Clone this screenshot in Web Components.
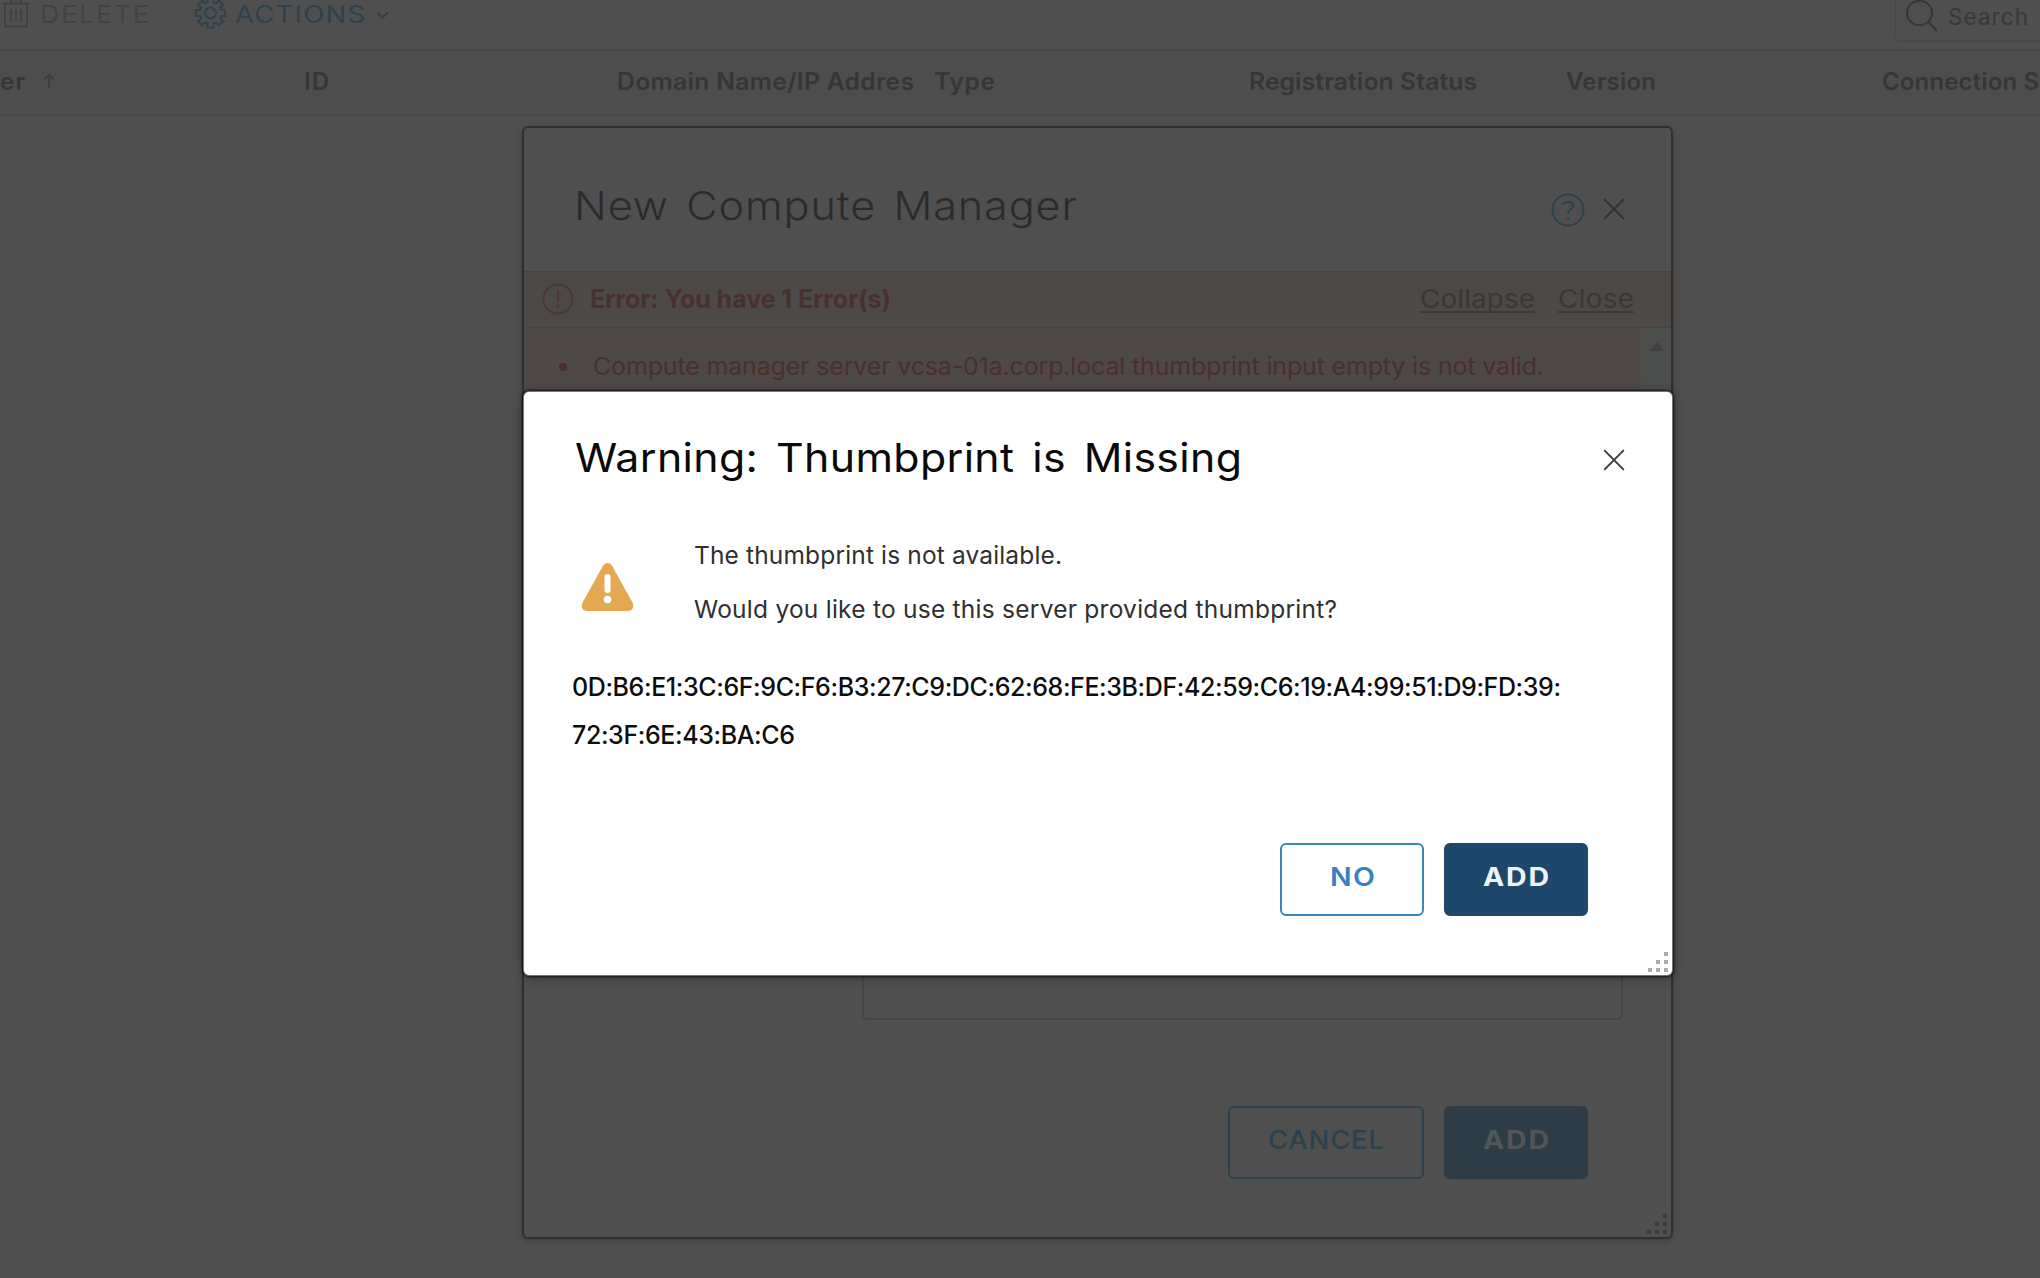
<!DOCTYPE html>
<html lang="en">
<head>
<meta charset="utf-8">
<title>Compute Managers</title>
<style>
html,body{margin:0;padding:0;width:2040px;height:1278px;overflow:hidden;background:#4f4f4f;font-family:Inter,"Liberation Sans",sans-serif}
</style>
</head>
<body>
<compute-page></compute-page>
<script>
const define = (name, html, init) => {
  const t = document.createElement('template');
  t.innerHTML = html.trim();
  customElements.define(name, class extends HTMLElement {
    connectedCallback() {
      if (this.shadowRoot) return;
      this.attachShadow({mode: 'open'}).append(t.content.cloneNode(true));
      if (init) init(this, this.shadowRoot);
    }
  });
};

// A single line of text that fills the width "w": glyphs widened by "s", the rest by tracking.
define('tracked-text', `<style>:host{display:block;white-space:pre;flex:none}span{display:inline-block;vertical-align:top;transform-origin:0 50%}</style><span><slot></slot></span>`,
(el, root) => {
  const s = root.querySelector('span');
  const w = parseFloat(el.getAttribute('w'));
  const k = parseFloat(el.getAttribute('s') || 1);
  const ls = (w / k - s.getBoundingClientRect().width) / (el.textContent.length - 1);
  s.style.letterSpacing = ls.toFixed(3) + 'px';
  s.style.marginRight = '-60px';
  if (k !== 1) s.style.transform = 'scaleX(' + k + ')';
  el.style.width = w + 'px';
});

define('close-icon', `
<style>:host{display:block;width:22px;height:22px}svg{display:block}</style>
<svg width="22" height="22" viewBox="0 0 22 22" fill="none" stroke="currentColor" stroke-width="1.9"><path d="M1.2 1.2L20.8 20.8M20.8 1.2L1.2 20.8"/></svg>`);

define('resize-grip', `
<style>:host{display:block;position:absolute;right:4px;bottom:3px}svg{display:block}</style>
<svg width="20" height="20" viewBox="0 0 20 20" fill="currentColor"><path d="M16 0h4v4h-4zM8 8h4v4h-4zM16 8h4v4h-4zM0 16h4v4H0zM8 16h4v4H8zM16 16h4v4h-4z"/></svg>`);

define('action-button', `
<style>
:host{display:flex;justify-content:center;box-sizing:border-box;height:73px;border:2px solid var(--line);border-radius:6px;background:var(--fill,transparent);color:var(--ink);font-size:25px;line-height:64px}
</style><slot></slot>`);

define('tool-bar', `
<style>
:host{display:flex;height:49px;box-sizing:border-box;font-size:24.500px;line-height:29px;color:#424242}
svg{display:block;flex:none}
.del{margin-left:10px}.gear{margin-left:45px}.act{margin-left:8px;color:#2d414e}.chev{margin:11px 0 0 11px}
.search{margin-left:auto;display:flex;width:145px;height:42px;box-sizing:border-box;border:solid #484848;border-width:0 0 2px 1px;border-radius:0 0 0 5px;padding-left:10px;font-size:22.500px;line-height:33px;color:#383838}
.search tracked-text{margin-left:10px}
</style>
<svg width="30" height="29" viewBox="0 0 30 29" fill="none" stroke="#404040" stroke-width="1.8"><path d="M2 3.5H30M5 4V26.5H27V4M11 9V22M16 9V22M21 9V22M11 3V0M21 3V0"/></svg>
<tracked-text class="del" w="109" s="1.1">DELETE</tracked-text>
<svg class="gear" width="33" height="29" viewBox="-16.500 -13 33 29" fill="none" stroke="#2d414e" stroke-width="2"><path id="g"/><circle r="5.400"/></svg>
<tracked-text class="act" w="130" s="1.12">ACTIONS</tracked-text>
<svg class="chev" width="13" height="9" viewBox="0 0 13 9" fill="none" stroke="#363b3e" stroke-width="2"><path d="M1.500 1.500L6.500 6.500L11.500 1.500"/></svg>
<div class="search"><svg width="32" height="34" viewBox="0 0 32 34" fill="none" stroke="#363636" stroke-width="2"><ellipse cx="13.500" cy="13" rx="12.500" ry="12.200"/><path d="M23 22.500L31 31"/></svg><tracked-text w="80">Search</tracked-text></div>`,
(el, root) => {
  // Eight-toothed cog outline
  let d = '';
  for (let i = 0; i < 8; i++) {
    const a = i * Math.PI / 4;
    [[-.27, 11], [-.2, 15], [.2, 15], [.27, 11]].forEach(([o, r], k) => {
      d += (i || k ? 'L' : 'M') + (r * Math.cos(a + o)).toFixed(2) + ' ' + (r * Math.sin(a + o)).toFixed(2);
    });
  }
  root.getElementById('g').setAttribute('d', d + 'Z');
});

define('grid-header', `
<style>
:host{display:grid;grid-template-columns:304px 313px 317px 315px 317px 316px 1fr;height:67px;box-sizing:border-box;border-top:2px solid #484848;border-bottom:1px solid #454545;background:#4d4d4d;font-size:24px;font-weight:600;line-height:62px;color:#363636}
.first{display:flex}svg{margin:22px 0 0 18px}
</style>
<div class="first"><tracked-text w="25">er</tracked-text><svg width="12" height="16" viewBox="0 0 12 16" fill="none" stroke="#2f414c" stroke-width="1.9"><path d="M6 15V2M1.500 6.500L6 2L10.500 6.500"/></svg></div>
<tracked-text w="25">ID</tracked-text>
<tracked-text w="297" s="1.03">Domain Name/IP Addres</tracked-text>
<tracked-text w="61" s="1.03">Type</tracked-text>
<tracked-text w="228" s="1.03">Registration Status</tracked-text>
<tracked-text w="90">Version</tracked-text>
<tracked-text w="157">Connection S</tracked-text>`);

define('error-panel', `
<style>
:host{display:block;color:#49302c;background:#4e4847;height:121px;overflow:hidden}
.bar{display:flex;height:57px;box-sizing:border-box;border-top:1px solid #503f3e;border-bottom:1px solid #503f3e;background:#4c4947;padding-left:18px;font-size:25px;line-height:55px}
svg{flex:none;display:block}.bar svg{margin-top:11px}
.bar b{font-weight:700;margin-left:16px}
.links{margin-left:auto;margin-right:37px;display:flex;gap:23px;color:#393738;font-size:26px;line-height:54px}
.links u{text-decoration:none;display:block;height:41px;box-sizing:border-box;border-bottom:2px solid #3d393a}
.list{display:flex;height:64px;font-size:24.500px;line-height:76px}
i{width:8px;height:8px;border-radius:50%;background:#49302c;margin:35px 26px 0 35px}
.scroll{margin-left:auto;width:30px;background:#4c4d4d}.scroll svg{margin:12px 0 0 9px}
</style>
<div class="bar"><svg width="32" height="32" viewBox="0 0 32 32" fill="none" stroke="#4b3835" stroke-width="1.800"><circle cx="16" cy="16" r="14.500"/><path d="M16 7.500V18.500M16 21.500V24.500" stroke-width="2.200"/></svg><b><tracked-text w="301">Error: You have 1 Error(s)</tracked-text></b>
<div class="links"><u><tracked-text w="115" s="1.07">Collapse</tracked-text></u><u><tracked-text w="76" s="1.07">Close</tracked-text></u></div></div>
<div class="list"><i></i><tracked-text w="951" s="1.02">Compute manager server vcsa-01a.corp.local thumbprint input empty is not valid.</tracked-text><div class="scroll"><svg width="14" height="12" viewBox="0 0 14 12" fill="#404040"><path d="M7 2L14 11H0z"/></svg></div></div>`);

define('manager-dialog', `
<style>
:host{position:absolute;left:522px;top:126px;width:1151px;height:1113px;box-sizing:border-box;border:2px solid #303030;border-radius:6px;background:#4f4f4f;box-shadow:0 2px 6px rgba(0,0,0,.22);display:flex;flex-direction:column}
header{display:flex;height:143px;flex:none;box-sizing:border-box;padding:0 47px 0 50px;font-size:40px;font-weight:350;line-height:156px;word-spacing:4px;color:#2b2b2b}
.ic{margin-left:auto;display:flex;gap:18px;padding-top:65px}
close-icon{margin:5px -1px 0 0;color:#303030}
.form{margin:0 48px 0 338px;height:626px;border:solid #454545;border-width:0 2px 2px;border-radius:0 0 5px 5px;flex:none}
footer{display:flex;justify-content:flex-end;gap:20px;margin:86px 83px 0 0}
.c{width:196px;--line:#2c414e;--ink:#2c414e;font-weight:500}.a{width:144px;--line:#2e3c45;--fill:#2e3c45;--ink:#515658;font-weight:700}
resize-grip{color:#3c3c3c}
</style>
<header><tracked-text w="503" s="1.08">New Compute Manager</tracked-text><div class="ic"><svg width="34" height="34" viewBox="0 0 34 34" fill="none" stroke="#2c414e" stroke-width="2.100"><circle cx="17" cy="17" r="15.500"/><path d="M11.500 11.800C13 9.500 15 8.800 17.200 8.800C20.300 8.800 22.300 10.400 22.300 12.900C22.300 16 17.200 16.400 17.200 19.800V21M17.200 24.500V27"/></svg><close-icon></close-icon></div></header>
<error-panel></error-panel>
<div class="form"></div>
<footer><action-button class="c"><tracked-text w="116" s="1.1">CANCEL</tracked-text></action-button><action-button class="a"><tracked-text w="66" s="1.14">ADD</tracked-text></action-button></footer>
<resize-grip></resize-grip>`);

define('warning-dialog', `
<style>
:host{position:absolute;left:524px;top:392px;width:1148px;height:583px;box-sizing:border-box;border-radius:5px;background:#fff;box-shadow:0 0 0 1px #777,0 0 2px 2px rgba(0,0,0,.65),0 2px 12px rgba(0,0,0,.38);display:flex;flex-direction:column}
header{display:flex;justify-content:space-between;height:130px;flex:none;padding:0 47px 0 51px;font-size:40px;font-weight:400;line-height:131px;word-spacing:5px;color:#0a0a0a}
close-icon{margin-top:57px;color:#3c3c3c}
.msg{display:flex;height:107px;padding-left:57px;gap:60px;color:#303030;font-size:24.500px;line-height:54px}
.msg svg{margin-top:40px}
.msg div{padding-top:6px}
.hash{padding:34px 0 0 48px;font-size:25px;font-weight:500;line-height:48px;color:#0d0d0d}
footer{display:flex;justify-content:flex-end;gap:20px;margin:84px 84px 0 0}
action-button{width:144px}
.n{--line:#3986c1;--ink:#3782bd;font-weight:600}.a{--line:#1d476b;--fill:#1d476b;--ink:#f0f3f6;font-weight:700}
resize-grip{color:#adadad}
</style>
<header><tracked-text w="667" s="1.07">Warning: Thumbprint is Missing</tracked-text><close-icon></close-icon></header>
<div class="msg"><svg width="53" height="50" viewBox="0 0 53 50"><path d="M26.500 1Q29.500 1 31.200 4L51.700 41Q54 49 46 49H7Q-1 49 1.300 41L21.800 4Q23.500 1 26.500 1Z" fill="#e5a852"/><path d="M26.500 15V28" stroke="#fff" stroke-width="6" stroke-linecap="round"/><circle cx="26.500" cy="37.500" r="3.800" fill="#fff"/></svg>
<div><tracked-text w="368">The thumbprint is not available.</tracked-text><tracked-text w="643">Would you like to use this server provided thumbprint?</tracked-text></div></div>
<div class="hash"><tracked-text w="989">0D:B6:E1:3C:6F:9C:F6:B3:27:C9:DC:62:68:FE:3B:DF:42:59:C6:19:A4:99:51:D9:FD:39:</tracked-text><tracked-text w="223">72:3F:6E:43:BA:C6</tracked-text></div>
<footer><action-button class="n"><tracked-text w="45" s="1.14">NO</tracked-text></action-button><action-button class="a"><tracked-text w="66" s="1.14">ADD</tracked-text></action-button></footer>
<resize-grip></resize-grip>`);

define('compute-page', `
<style>:host{display:block;position:relative;width:2040px;height:1278px;overflow:hidden;background:#4f4f4f}</style>
<tool-bar></tool-bar><grid-header></grid-header><manager-dialog></manager-dialog><warning-dialog></warning-dialog>`);
</script>
</body>
</html>
